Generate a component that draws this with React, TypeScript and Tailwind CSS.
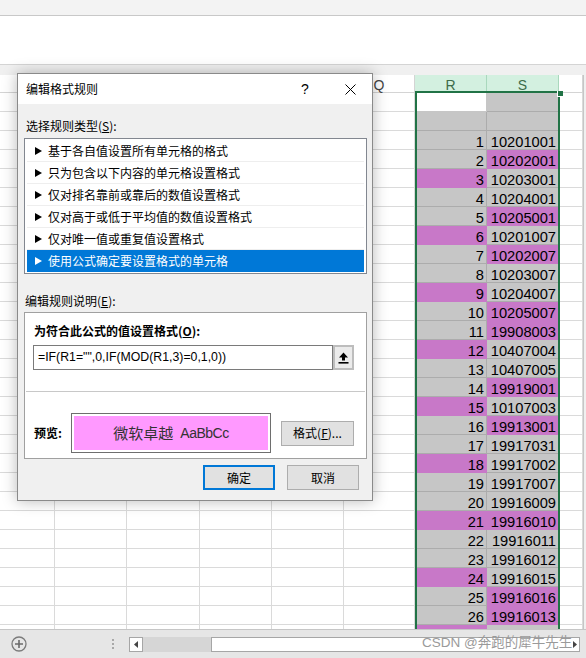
import React from "react";

const S_DATA: [string, boolean][] = [
  ["10201001", false],
  ["10202001", true],
  ["10203001", false],
  ["10204001", false],
  ["10205001", true],
  ["10201007", false],
  ["10202007", true],
  ["10203007", false],
  ["10204007", false],
  ["10205007", true],
  ["19908003", true],
  ["10407004", false],
  ["10407005", false],
  ["19919001", true],
  ["10107003", false],
  ["19913001", true],
  ["19917031", false],
  ["19917002", false],
  ["19917007", false],
  ["19916009", false],
  ["19916010", true],
  ["19916011", false],
  ["19916012", false],
  ["19916015", false],
  ["19916016", true],
  ["19916013", true],
  ["19916014", false],
];

const ITEMS = [
  "基于各自值设置所有单元格的格式",
  "只为包含以下内容的单元格设置格式",
  "仅对排名靠前或靠后的数值设置格式",
  "仅对高于或低于平均值的数值设置格式",
  "仅对唯一值或重复值设置格式",
  "使用公式确定要设置格式的单元格",
];

const LEFT_COLS = ["L", "M", "N", "O", "P"];

const GRAY = "bg-[#c6c6c6] border-r border-b border-[#acacac]";
const PINK = "bg-[#c878c8] border-r border-b border-[#c878c8]";
const WHITE = "bg-white border-r border-b border-[#dadada]";
const NUM =
  "text-right pr-[2px] pt-[4px] leading-[14px] text-[14.67px] font-['Liberation_Sans',Arial,sans-serif] text-black overflow-hidden whitespace-nowrap";
const CJK = "font-['Noto_Sans_CJK_SC','Noto_Sans',sans-serif]";
const LAT = "font-['Liberation_Sans',Arial,sans-serif]";
const HEAD =
  "bg-white border-r border-b border-[#d4d4d4] text-[#444444] flex items-center justify-center pt-[2px] leading-[14px]";
const HEAD_SEL =
  "bg-[#d3f0e0] border-r border-b border-[#a9d8bd] text-[#3d6b4a] flex items-center justify-center pt-[2px] leading-[14px]";

function Tri({ white }: { white?: boolean }) {
  return (
    <svg width="7" height="8" viewBox="0 0 7 8">
      <path d="M0 0 L7 4 L0 8 Z" fill={white ? "#ffffff" : "#000000"} />
    </svg>
  );
}

function GridRow({ i }: { i: number }) {
  let rCls = GRAY;
  let sCls = GRAY;
  let rTxt = "";
  let sTxt = "";
  if (i === 0) {
    rCls = "bg-white border-r border-b border-[#c6c6c6]";
  } else if (i >= 2) {
    const v = i - 1;
    if (v <= 26) rTxt = String(v);
    if (v % 3 === 0) rCls = PINK;
    const d = S_DATA[v - 1];
    if (d) {
      if (v <= 26) sTxt = d[0];
      if (d[1]) sCls = PINK;
    }
  }
  return (
    <div className="grid grid-cols-[55px_72px_73px_72px_72px_71px_72px_72px_24px_3px] h-[19px] shrink-0">
      {[0, 1, 2, 3, 4, 5].map((k) => (
        <div key={k} className={WHITE} />
      ))}
      <div className={`${rCls} ${NUM}`}>{rTxt}</div>
      <div className={`${sCls} ${NUM}`}>{sTxt}</div>
      <div className={WHITE} />
      <div className="bg-[#f0f0f0] border-l border-[#c6c6c6]" />
    </div>
  );
}

export default function App() {
  const rows = Array.from({ length: 29 }, (_, i) => i);
  return (
    <div className="relative w-[586px] h-[658px] overflow-hidden bg-white flex flex-col">
      {/* top areas */}
      <div className="h-[16px] shrink-0 bg-[#f3f3f3] border-b border-[#c8c8c8]" />
      <div className="h-[49px] shrink-0 bg-white border-b border-[#d4d4d4]" />
      <div className="h-[10px] shrink-0 bg-[#f0f0f0]" />

      {/* column header */}
      <div
        className={`grid grid-cols-[55px_72px_73px_72px_72px_71px_72px_72px_24px_3px] h-[18px] shrink-0 text-[14px] ${LAT}`}
      >
        {LEFT_COLS.map((l) => (
          <div key={l} className={HEAD} />
        ))}
        <div className={HEAD}>Q</div>
        <div className={HEAD_SEL}>R</div>
        <div className={HEAD_SEL}>S</div>
        <div className={HEAD} />
        <div className="bg-[#f0f0f0] border-l border-[#c6c6c6]" />
      </div>

      {/* grid */}
      <div className="h-[536px] shrink-0 overflow-hidden flex flex-col">
        {rows.map((i) => (
          <GridRow key={i} i={i} />
        ))}
      </div>

      {/* selection */}
      <div className="absolute left-[415px] top-[91px] w-[145px] h-[560px] border-2 border-[#217346]" />
      <div className="absolute left-[557px] top-[91px] w-[6px] h-[6px] bg-[#217346] border-l border-b border-white" />

      {/* bottom bar */}
      <div className="relative z-10 h-[29px] shrink-0 border-t border-[#c6c6c6] bg-[#e6e6e6] flex items-center">
        <div className="w-[38px] flex justify-center">
          <svg width="16" height="16" viewBox="0 0 16 16">
            <circle cx="8" cy="8" r="7" fill="none" stroke="#7b7b7b" strokeWidth="1.3" />
            <path d="M8 4 V12 M4 8 H12" stroke="#6b6b6b" strokeWidth="1.6" />
          </svg>
        </div>
        <div className="ml-[74px] w-[2px] flex flex-col gap-[2px]">
          <div className="w-[2px] h-[2px] bg-[#a8a8a8]" />
          <div className="w-[2px] h-[2px] bg-[#a8a8a8]" />
          <div className="w-[2px] h-[2px] bg-[#a8a8a8]" />
        </div>
        <div className="ml-[15px] flex h-[15px]">
          <div className="w-[14px] h-[15px] bg-white border border-[#a6a6a6] flex items-center justify-center">
            <svg width="4" height="7" viewBox="0 0 4 7">
              <path d="M4 0 L0 3.5 L4 7 Z" fill="#444444" />
            </svg>
          </div>
          <div className="w-[68px] h-[15px] bg-[#d6d6d6]" />
          <div className="w-[369px] h-[15px] bg-white border border-[#a6a6a6] flex items-center justify-end pr-[2px]">
            <svg width="4" height="7" viewBox="0 0 4 7">
              <path d="M0 0 L4 3.5 L0 7 Z" fill="#444444" />
            </svg>
          </div>
        </div>
      </div>

      {/* watermark */}
      <div className="absolute z-10 left-[422px] top-[635px] text-[13.5px] leading-[16px] text-[#9a9a9a] whitespace-nowrap font-['Liberation_Sans','Noto_Sans_CJK_SC',sans-serif]">
        CSDN @奔跑的犀牛先生
      </div>

      {/* dialog */}
      <div
        className={`absolute z-20 left-[17px] top-[73px] w-[356px] h-[428px] border border-[#8a8a8a] bg-[#f0f0f0] shadow-[0_0_14px_rgba(0,0,0,0.28)] flex flex-col text-[12px] text-black ${CJK}`}
      >
        <div className="h-[30px] shrink-0 bg-white flex items-center">
          <span className="pl-[8px] leading-[16px]">编辑格式规则</span>
          <span className={`ml-auto w-[30px] text-center text-[14px] leading-[16px] ${LAT}`}>?</span>
          <span className="ml-[15px] mr-[7px] w-[30px] flex justify-center">
            <svg width="11" height="11" viewBox="0 0 11 11">
              <path d="M0.5 0.5 L10.5 10.5 M10.5 0.5 L0.5 10.5" stroke="#000000" strokeWidth="1" />
            </svg>
          </span>
        </div>

        <div className="flex flex-col pl-[6px] pr-[5px]">
          <div className="mt-[14px] ml-[2px] leading-[16px]">
            选择规则类型(<span className="underline">S</span>):
          </div>

          <div className="mt-[4px] h-[136px] border border-[#828790] bg-white py-[1px] px-[2px] flex flex-col">
            {ITEMS.map((t, k) => {
              const sel = k === ITEMS.length - 1;
              return (
                <div
                  key={t}
                  className={
                    sel
                      ? "h-[22px] shrink-0 flex items-center pl-[8px] bg-[#0078d7] text-white"
                      : "h-[22px] shrink-0 flex items-center pl-[8px] border-b border-[#eeeeee]"
                  }
                >
                  <Tri white={sel} />
                  <span className="ml-[6px] leading-[16px]">{t}</span>
                </div>
              );
            })}
          </div>

          <div className="mt-[19px] ml-[1px] leading-[16px]">
            编辑规则说明(<span className="underline">E</span>):
          </div>

          <div className="mt-[3px] h-[147px] border border-[#a0a0a0] bg-white flex flex-col">
            <div className="pt-[10px] pl-[9px] font-bold leading-[16px]">
              为符合此公式的值设置格式(<span className="underline">O</span>):
            </div>
            <div className="mt-[6px] pl-[8px] flex h-[25px]">
              <div
                className={`w-[300px] h-[25px] border border-[#7a7a7a] bg-white flex items-center pl-[4px] text-[12.3px] ${LAT}`}
              >
                =IF(R1=&quot;&quot;,0,IF(MOD(R1,3)=0,1,0))
              </div>
              <div className="w-[21px] h-[25px] border-2 border-[#bdbdbd] bg-[#ebebeb] flex items-center justify-center">
                <svg width="11" height="12" viewBox="0 0 11 12">
                  <path d="M5.5 0.5 L10 5.5 H7 V8.5 H4 V5.5 H1 Z" fill="#000000" />
                  <rect x="0.5" y="10" width="10" height="1.6" fill="#000000" />
                </svg>
              </div>
            </div>
            <div className="mt-[21px] mx-[1px] h-[1px] bg-[#c8c8c8]" />
            <div className="mt-[21px] pl-[9px] flex items-center h-[40px]">
              <div className="w-[37px] font-bold leading-[16px]">预览:</div>
              <div className="w-[200px] h-[40px] border border-[#6e6e6e] bg-white p-[2px]">
                <div className="w-full h-full bg-[#ff99ff] flex items-center justify-center text-[#333333]">
                  <span className="text-[15px] leading-[18px]">微软卓越</span>
                  <span className={`ml-[7px] text-[14px] tracking-[-0.5px] leading-[18px] ${LAT}`}>AaBbCc</span>
                </div>
              </div>
              <div className="ml-[10px] w-[73px] h-[25px] bg-[#e1e1e1] border border-[#adadad] flex items-center justify-center leading-[16px]">
                格式(<span className="underline">F</span>)...
              </div>
            </div>
          </div>

          <div className="mt-[6px] flex justify-end gap-[12px] pr-[8px]">
            <div className="w-[72px] h-[25px] bg-[#e1e1e1] border-2 border-[#0078d7] flex items-center justify-center leading-[16px]">
              确定
            </div>
            <div className="w-[72px] h-[25px] bg-[#e1e1e1] border border-[#adadad] flex items-center justify-center leading-[16px]">
              取消
            </div>
          </div>
        </div>
      </div>
    </div>
  );
}
